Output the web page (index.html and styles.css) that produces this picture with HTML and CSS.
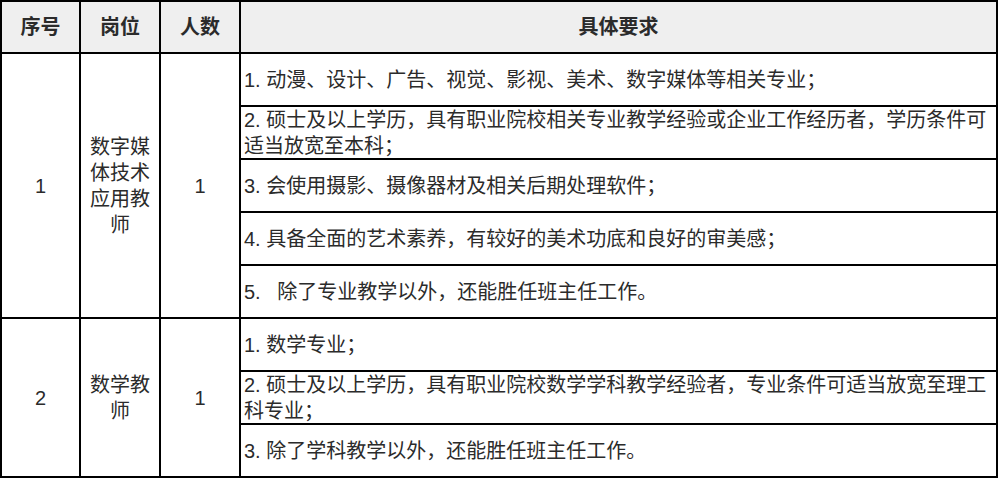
FILE: index.html
```html
<!DOCTYPE html>
<html lang="zh-CN">
<head>
<meta charset="utf-8">
<title>岗位要求</title>
<link rel="stylesheet" href="styles.css">
</head>
<body>
<div class="grid">
  <div class="cell head">序号</div>
  <div class="cell head">岗位</div>
  <div class="cell head">人数</div>
  <div class="cell head">具体要求</div>

  <div class="cell center span5">1</div>
  <div class="cell center span5"><span class="post">数字媒体技术应用教师</span></div>
  <div class="cell center span5">1</div>
  <div class="cell req">1. 动漫、设计、广告、视觉、影视、美术、数字媒体等相关专业；</div>
  <div class="cell req">2. 硕士及以上学历，具有职业院校相关专业教学经验或企业工作经历者，学历条件可适当放宽至本科；</div>
  <div class="cell req">3. 会使用摄影、摄像器材及相关后期处理软件；</div>
  <div class="cell req">4. 具备全面的艺术素养，有较好的美术功底和良好的审美感；</div>
  <div class="cell req">5.&nbsp;&nbsp; 除了专业教学以外，还能胜任班主任工作。</div>

  <div class="cell center span3">2</div>
  <div class="cell center span3"><span class="post">数学教师</span></div>
  <div class="cell center span3">1</div>
  <div class="cell req">1. 数学专业；</div>
  <div class="cell req">2. 硕士及以上学历，具有职业院校数学学科教学经验者，专业条件可适当放宽至理工科专业；</div>
  <div class="cell req">3. 除了学科教学以外，还能胜任班主任工作。</div>
</div>
</body>
</html>
```

FILE: styles.css
```css
html, body {
  margin: 0;
  padding: 0;
  background: #ffffff;
}

body {
  font-family: "Liberation Sans", "Noto Sans CJK SC", sans-serif;
  font-size: 20px;
  color: #2b2b2b;
}

.grid {
  display: grid;
  width: 998px;
  box-sizing: border-box;
  grid-template-columns: 79px 80px 80px 1fr;
  grid-template-rows: 52px repeat(8, 53px);
  border-top: 2px solid #000;
  border-left: 2px solid #000;
}

.cell {
  box-sizing: border-box;
  border-right: 2px solid #000;
  border-bottom: 2px solid #000;
  display: flex;
  align-items: center;
  line-height: 26px;
  min-width: 0;
}

.head {
  background: #efefef;
  justify-content: center;
  font-weight: bold;
}

.center {
  justify-content: center;
  text-align: center;
}

.span5 {
  grid-row: span 5;
}

.span3 {
  grid-row: span 3;
}

.post {
  display: block;
  width: 100%;
  text-align: center;
}

.req {
  padding: 0 3px;
}
```
